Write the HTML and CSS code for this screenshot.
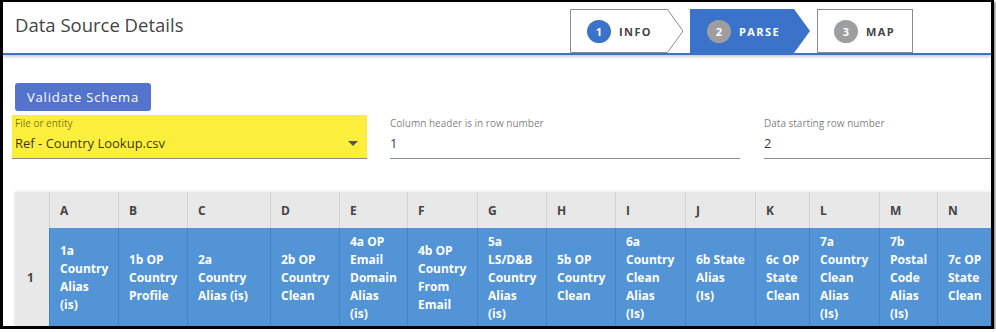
FILE: index.html
```html
<!DOCTYPE html>
<html lang="en">
<head>
  <meta charset="UTF-8">
  <meta name="viewport" content="width=device-width, initial-scale=1.0">
  <title>Data Source Details</title>
  <link rel="stylesheet" href="styles.css">
</head>
<body>
  <div class="frame">
    <header class="top-bar">
      <h1 class="title">Data Source Details</h1>
      <ol class="stepper">
        <li class="step step-done">
          <svg class="step-shape" width="114" height="44" viewBox="0 0 114 44">
            <polygon points="0.5,0.5 97.5,0.5 113,22 97.5,43.5 0.5,43.5" fill="#fff" stroke="#8c8c8c"/>
          </svg>
          <span class="step-label"><span class="step-num">1</span>INFO</span>
        </li>
        <li class="step step-active">
          <svg class="step-shape" width="120" height="44" viewBox="0 0 120 44">
            <polygon points="0,0 104,0 120,22 104,44 0,44" fill="#3a73c9"/>
          </svg>
          <span class="step-label"><span class="step-num">2</span>PARSE</span>
        </li>
        <li class="step step-next">
          <svg class="step-shape" width="96" height="44" viewBox="0 0 96 44">
            <rect x="0.5" y="0.5" width="95" height="43" fill="#fff" stroke="#8c8c8c"/>
          </svg>
          <span class="step-label"><span class="step-num">3</span>MAP</span>
        </li>
      </ol>
    </header>

    <main class="content">
      <button class="btn-validate">Validate Schema</button>

      <div class="fields">
        <div class="field field-file">
          <span class="field-label">File or entity</span>
          <span class="field-value">Ref - Country Lookup.csv <span class="caret"></span></span>
        </div>
        <div class="field field-header">
          <span class="field-label">Column header is in row number</span>
          <span class="field-value">1</span>
        </div>
        <div class="field field-data">
          <span class="field-label">Data starting row number</span>
          <span class="field-value">2</span>
        </div>
      </div>

      <!-- preview of the parsed file -->
      <table class="preview">
        <colgroup>
          <col class="w34"><col class="w69"><col class="w69"><col class="w83"><col class="w69">
          <col class="w68"><col class="w70"><col class="w69"><col class="w69"><col class="w70">
          <col class="w70"><col class="w54"><col class="w70"><col class="w58"><col class="w70">
        </colgroup>
        <thead>
          <tr>
            <th class="row-num"></th>
            <th>A</th><th>B</th><th>C</th><th>D</th><th>E</th><th>F</th><th>G</th>
            <th>H</th><th>I</th><th>J</th><th>K</th><th>L</th><th>M</th><th>N</th>
          </tr>
        </thead>
        <tbody>
          <tr>
            <td class="row-num">1</td>
            <td>1a<br>Country<br>Alias<br>(is)</td>
            <td>1b OP<br>Country<br>Profile</td>
            <td>2a<br>Country<br>Alias (is)</td>
            <td>2b OP<br>Country<br>Clean</td>
            <td>4a OP<br>Email<br>Domain<br>Alias<br>(is)</td>
            <td>4b OP<br>Country<br>From<br>Email</td>
            <td>5a<br>LS/D&amp;B<br>Country<br>Alias<br>(is)</td>
            <td>5b OP<br>Country<br>Clean</td>
            <td>6a<br>Country<br>Clean<br>Alias<br>(Is)</td>
            <td>6b State<br>Alias<br>(Is)</td>
            <td>6c OP<br>State<br>Clean</td>
            <td>7a<br>Country<br>Clean<br>Alias<br>(Is)</td>
            <td>7b<br>Postal<br>Code<br>Alias<br>(Is)</td>
            <td>7c OP<br>State<br>Clean</td>
          </tr>
        </tbody>
      </table>
    </main>
  </div>
</body>
</html>
```

FILE: styles.css
```css
body {
  margin: 0;
  font-family: "Open Sans", "Noto Sans", sans-serif;
  background-color: #fff;
}

.frame {
  width: 994px;
  height: 329px;
  box-sizing: border-box;
  border: solid #000;
  border-width: 2px 3px 3px 3px;
  overflow: hidden;
  background-color: #fff;
  box-shadow: 2px 2px 2px rgba(0, 0, 0, 0.4);
}

/* Header with title and stepper */
.top-bar {
  position: relative;
  z-index: 1;
  display: flex;
  align-items: flex-start;
  height: 51px;
  padding-right: 78px;
  border-bottom: 2px solid #3a73c9;
  box-shadow: 0 2px 3px rgba(0, 0, 0, 0.2);
}

.title {
  margin: 11px 0 0 12px;
  font-size: 18.5px;
  line-height: 24px;
  font-weight: 400;
  color: #444;
}

.stepper {
  display: flex;
  gap: 6px;
  margin: 7px 0 0 auto;
  padding: 0;
  list-style: none;
}

.step {
  display: grid;
}

.step > * {
  grid-area: 1 / 1;
}

.step-next {
  margin-left: 1px;
}

.step-label {
  display: flex;
  align-items: center;
  gap: 8px;
  align-self: center;
  padding-left: 17px;
  font-size: 11px;
  font-weight: 700;
  letter-spacing: 1.4px;
  color: #444;
}

.step-num {
  display: flex;
  justify-content: center;
  align-items: center;
  width: 24px;
  height: 23px;
  border-radius: 50%;
  background-color: #9e9e9e;
  color: #fff;
  letter-spacing: 0;
}

.step-done .step-num {
  background-color: #3a73c9;
}

.step-active .step-label {
  color: #fff;
}

/* Form area */
.content {
  padding: 28px 12px 0;
}

.btn-validate {
  display: block;
  width: 136px;
  height: 28px;
  padding: 0;
  border: none;
  border-radius: 3px;
  background-color: #5473cc;
  color: #fff;
  font-family: "Open Sans", sans-serif;
  font-size: 13px;
  letter-spacing: 0.8px;
}

.fields {
  display: flex;
  margin-top: 4px;
}

.field {
  display: flex;
  flex-direction: column;
  flex: none;
  box-sizing: border-box;
  padding: 1px 0 6px;
  border-bottom: 1px solid #8a8a8a;
}

.field-file {
  width: 355px;
  margin-left: -3px;
  padding-left: 3px;
  background-color: #fcef3b;
}

.field-header {
  width: 350px;
  margin-left: 23px;
}

.field-data {
  width: 260px;
  margin-left: 24px;
}

.field-label {
  font-size: 10px;
  line-height: 14px;
  color: rgba(0, 0, 0, 0.54);
}

.field-value {
  display: flex;
  justify-content: space-between;
  align-items: center;
  margin-top: 4px;
  font-size: 13px;
  line-height: 18px;
  color: rgba(0, 0, 0, 0.8);
}

.caret {
  width: 0;
  height: 0;
  margin-right: 9px;
  border-left: 5px solid transparent;
  border-right: 5px solid transparent;
  border-top: 5px solid #555;
}

/* Preview table */
.preview {
  margin-top: 33px;
  width: 992px;
  table-layout: fixed;
  border-collapse: separate;
  border-spacing: 0;
  font-size: 12px;
  box-shadow: 0 0 3px rgba(0, 0, 0, 0.15);
}

.w34 { width: 34px; }
.w54 { width: 54px; }
.w58 { width: 58px; }
.w68 { width: 68px; }
.w69 { width: 69px; }
.w70 { width: 70px; }
.w83 { width: 83px; }

.preview thead tr {
  height: 36px;
}

.preview th {
  padding: 0 0 0 10px;
  border-left: 1px solid #d2d2d2;
  background-color: #e8e8e8;
  color: #444;
  font-weight: 700;
  text-align: left;
}

.preview td {
  padding: 5px 0 5px 10px;
  border-left: 1px solid #4583c5;
  background-color: #5294d6;
  color: #fff;
  font-weight: 700;
  line-height: 18px;
  white-space: nowrap;
  vertical-align: middle;
}

.preview .row-num {
  padding-left: 12px;
  border-left: none;
  background-color: #e8e8e8;
  color: #444;
}
```
